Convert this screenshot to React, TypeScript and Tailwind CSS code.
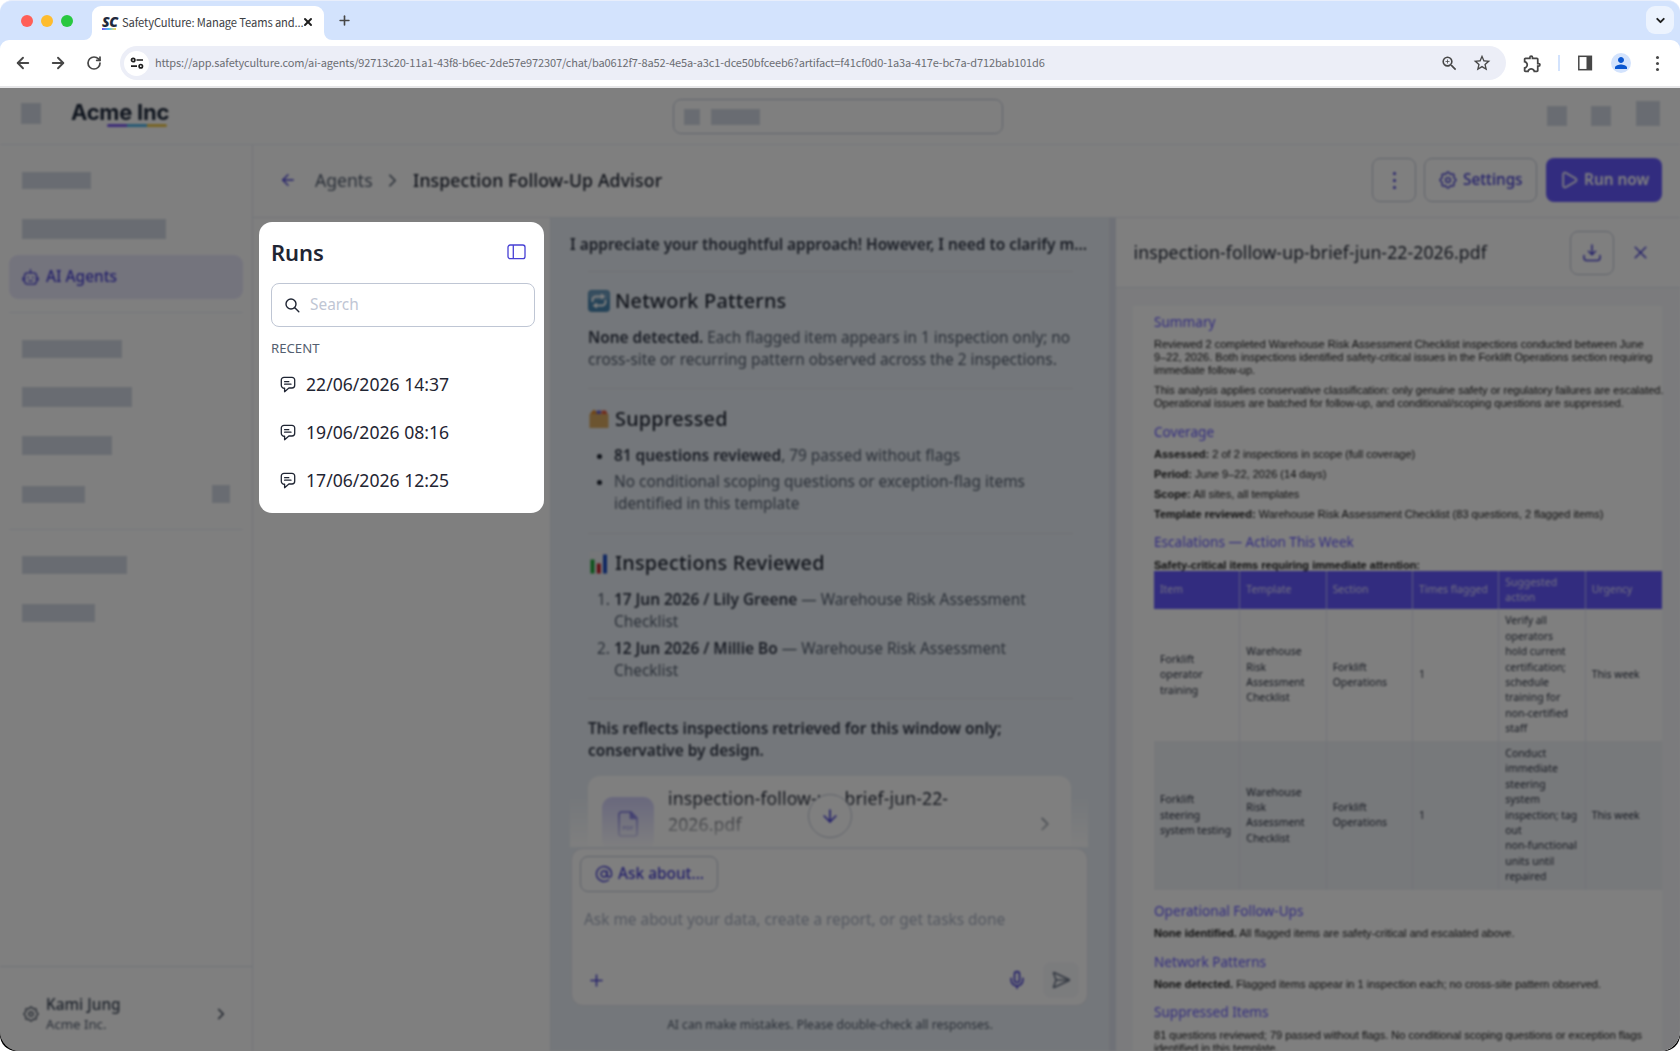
import React from 'react';
import {
  ArrowDown,
  ArrowLeft,
  ArrowRight,
  AtSign,
  ChevronDown,
  ChevronRight,
  Mic,
  Play,
  Plus,
  RotateCw,
  SendHorizontal,
  X,
} from 'lucide-react';
import { MdOutlineExtension, MdPerson, MdStarOutline, MdZoomIn } from 'react-icons/md';

const RUNS = ['22/06/2026 14:37', '19/06/2026 08:16', '17/06/2026 12:25'];

const TABLE_HEAD = ['Item', 'Template', 'Section', 'Times flagged', 'Suggested action', 'Urgency'];

const TABLE_ROWS = [
  [
    ['Forklift', 'operator', 'training'],
    ['Warehouse', 'Risk', 'Assessment', 'Checklist'],
    ['Forklift', 'Operations'],
    ['1'],
    ['Verify all', 'operators', 'hold current', 'certification;', 'schedule', 'training for', 'non-certified', 'staff'],
    ['This week'],
  ],
  [
    ['Forklift', 'steering', 'system testing'],
    ['Warehouse', 'Risk', 'Assessment', 'Checklist'],
    ['Forklift', 'Operations'],
    ['1'],
    ['Conduct', 'immediate', 'steering', 'system', 'inspection; tag', 'out', 'non-functional', 'units until', 'repaired'],
    ['This week'],
  ],
];

// Outline of the eight-lobed gear, sampled once
const GEAR_PATH =
  Array.from({ length: 96 }, (_, i) => {
    const a = (i / 96) * Math.PI * 2;
    const r = 9.5 + 1.1 * Math.cos(8 * a);
    return `${i === 0 ? 'M' : 'L'}${(12 + r * Math.cos(a)).toFixed(2)} ${(12 + r * Math.sin(a)).toFixed(2)}`;
  }).join('') + 'Z';

const GearIcon: React.FC<{ className?: string }> = ({ className }) => (
  <svg viewBox="0 0 24 24" fill="none" stroke="currentColor" strokeWidth="1.9" className={className}>
    <path d={GEAR_PATH} />
    <circle cx="12" cy="12" r="3.2" />
  </svg>
);

const BotIcon: React.FC = () => (
  <svg width="17" height="18" viewBox="0 0 17 18" fill="none" stroke="currentColor" strokeWidth="1.3" strokeLinecap="round">
    <rect x="2.5" y="4.8" width="12" height="11.4" rx="3" />
    <path d="M8.5 4.8V1.6M1 9.5v3M16 9.5v3M6.6 12.8h3.8" />
    <path d="M6.2 9.2v.4M10.8 9.2v.4" strokeWidth="1.6" />
  </svg>
);

const ChatIcon: React.FC = () => (
  <svg width="16" height="17" viewBox="0 0 16 17" fill="none" stroke="currentColor" strokeWidth="1.3" strokeLinecap="round" strokeLinejoin="round">
    <path d="M4 1.300h8A2.700 2.700 0 0 1 14.700 4v5.300A2.700 2.700 0 0 1 12 12H8.900l-4.300 3.700V12.200A2.900 2.900 0 0 1 1.300 9.300V4A2.700 2.700 0 0 1 4 1.300Z" />
    <path d="M4.600 5.700h4.200M4.600 8.200h6.400" />
  </svg>
);

const PanelIcon: React.FC = () => (
  <svg width="19" height="16" viewBox="0 0 19 16" fill="none" stroke="currentColor" strokeWidth="1.3">
    <rect x="1" y="1" width="17" height="13.6" rx="2.2" />
    <path d="M6.300 1v13.600" />
  </svg>
);

const RepeatEmoji: React.FC = () => (
  <svg width="22" height="22" viewBox="0 0 22 22">
    <rect width="22" height="22" rx="4" fill="#4a86b0" />
    <rect x="1" y="1" width="20" height="9" rx="3" fill="#6f9dbf" />
    <path d="M4.500 12V10a3.500 3.500 0 0 1 3.500-3.500h6M17.500 10v2a3.500 3.500 0 0 1-3.500 3.500H8" fill="none" stroke="#fff" strokeWidth="2" />
    <path d="m13 3.500 4.500 3-4.500 3ZM9 12.500l-4.500 3 4.500 3Z" fill="#fff" />
  </svg>
);

const FolderEmoji: React.FC = () => (
  <svg width="22" height="22" viewBox="0 0 22 22">
    <path d="M2.500 5 6 1.500 9.500 5v3h-7Z" fill="#e08a2e" />
    <path d="M8.500 2.500h4.500V6H8.500Z" fill="#6a62c8" />
    <path d="M13.500 2.500H18L19.500 6h-6Z" fill="#e2583c" />
    <path d="M1.500 6h19v14h-19Z" fill="#d9a860" />
  </svg>
);

const ChartEmoji: React.FC = () => (
  <svg width="22" height="22" viewBox="0 0 22 22">
    <rect x="1.500" width="18" height="22" fill="#eef0f4" />
    <rect x="2.500" y="7.500" width="4" height="14" fill="#1ea53a" />
    <rect x="8.800" y="11.500" width="4" height="10" fill="#c3202c" />
    <rect x="15" y="2.500" width="4" height="19" fill="#1f4fc4" />
  </svg>
);

const Block: React.FC<{ className: string }> = ({ className }) => (
  <div className={`shrink-0 bg-[#d3d9e4] ${className}`} />
);

const BrowserChrome: React.FC = () => (
  <div className="h-[88px] shrink-0 overflow-hidden rounded-t-[12px] border-t border-[#e8eefb] bg-[#d3e3fd] font-['Noto_Sans_CJK_JP','Noto_Sans',sans-serif]">
    <div className="flex h-[39px] items-end pr-[6px]">
      <div className="flex h-full w-[84px] items-center gap-[8px] pl-[21px]">
        <span className="size-[12px] rounded-full bg-[#ff5f57]" />
        <span className="size-[12px] rounded-full bg-[#febc2e]" />
        <span className="size-[12px] rounded-full bg-[#28c840]" />
      </div>
      <svg width="8" height="8" viewBox="0 0 8 8">
        <path d="M8 0v8H0a8 8 0 0 0 8-8Z" fill="#fff" />
      </svg>
      <div className="flex h-[34px] w-[232px] items-center rounded-t-[9px] bg-white pl-[10px]">
        <div className="flex w-[17px] flex-col">
          <span className="font-['Open_Sans',sans-serif] text-[14px] leading-[11px] font-extrabold tracking-[-0.500px] text-[#1f2a3d] italic">SC</span>
          <span className="mt-px h-[1.500px] w-[14px] bg-linear-to-r from-[#7a4cf0] via-[#3cc3f0] to-[#ffd53d]" />
        </div>
        <span className="ml-[3px] w-[180px] pb-[2px] text-[11.200px] leading-[20px] tracking-[-0.120px] whitespace-nowrap text-[#3c4043]">
          SafetyCulture: Manage Teams and...
        </span>
        <X className="-mt-[3px] size-[12px] text-[#1f1f1f]" strokeWidth={4} />
      </div>
      <svg width="8" height="8" viewBox="0 0 8 8">
        <path d="M0 0v8h8a8 8 0 0 1-8-8Z" fill="#fff" />
      </svg>
      <Plus className="mb-[12px] ml-[5px] size-[15px] text-[#474747]" strokeWidth={2.600} />
      <div className="mb-[6px] ml-auto flex h-[28px] w-[28px] items-center justify-center rounded-[9px] bg-[#ecf3fe]">
        <ChevronDown className="size-[13px] text-[#1f1f1f]" strokeWidth={3.500} />
      </div>
    </div>
    <div className="flex h-[48px] items-center rounded-t-[9px] border-b-2 border-[#e6e6e8] bg-white pl-[14px] text-[#474747]">
      <ArrowLeft className="size-[18px]" strokeWidth={2.500} />
      <ArrowRight className="ml-[17px] size-[18px]" strokeWidth={2.500} />
      <RotateCw className="ml-[19px] size-[16px]" strokeWidth={2.600} />
      <div className="ml-[18px] flex h-[34px] w-[1386px] items-center rounded-full bg-[#eceef7] pl-[4px]">
        <div className="flex size-[25px] items-center justify-center rounded-full bg-white">
          <svg width="14" height="14" viewBox="0 0 14 14" fill="none" stroke="#1f1f1f" strokeWidth="1.700">
            <circle cx="3.200" cy="4" r="1.700" />
            <path d="M6.500 4H13M1 10.200h6" />
            <circle cx="10.800" cy="10.200" r="1.700" />
          </svg>
        </div>
        <span className="ml-[6px] w-[1276px] pb-px text-[11px] tracking-[-0.132px] whitespace-nowrap text-[#6b6d73]">
          https://app.safetyculture.com/ai-agents/92713c20-11a1-43f8-b6ec-2de57e972307/chat/ba0612f7-8a52-4e5a-a3c1-dce50bfceeb6?artifact=f41cf0d0-1a3a-417e-bc7a-d712bab101d6
        </span>
        <MdZoomIn className="ml-[9px] size-[19px]" />
        <MdStarOutline className="ml-[13px] size-[20px]" />
      </div>
      <MdOutlineExtension className="ml-[16px] size-[21px]" />
      <div className="ml-[15px] h-[16px] w-[2px] bg-[#d3e3fd]" />
      <svg className="ml-[17px]" width="16" height="16" viewBox="0 0 16 16">
        <rect x="1.800" y="1.300" width="12.600" height="13.400" fill="none" stroke="#474747" strokeWidth="1.500" />
        <path d="M9.500 1.300h5v13.400h-5Z" fill="#474747" />
      </svg>
      <div className="ml-[18px] flex size-[20px] items-center justify-center rounded-full bg-[#d3e3fd]">
        <MdPerson className="size-[18px] text-[#0b57d0]" />
      </div>
      <div className="ml-[25px] flex flex-col gap-[3px]">
        <span className="size-[3px] rounded-full bg-[#474747]" />
        <span className="size-[3px] rounded-full bg-[#474747]" />
        <span className="size-[3px] rounded-full bg-[#474747]" />
      </div>
    </div>
  </div>
);

const TopBar: React.FC = () => (
  <div className="flex h-[57px] shrink-0 border-b border-[#e9eef6] pr-[20px] pl-[21px]">
    <Block className="mt-[15px] h-[21px] w-[20px]" />
    <div className="mt-[11px] ml-[30px] w-[98px]">
      <p className="font-['Inter',sans-serif] text-[22px] leading-[27px] font-bold tracking-[-0.250px] whitespace-nowrap text-[#1f2a3d]">Acme Inc</p>
      <div className="-mt-[2px] ml-[36px] flex h-[3px] w-[60px] overflow-hidden rounded-sm">
        <span className="flex-1 bg-[#7a5af0]" />
        <span className="flex-1 bg-[#4fb4e8]" />
        <span className="flex-1 bg-[#f0c94a]" />
      </div>
    </div>
    <div className="mt-[11px] ml-[504px] flex h-[35px] w-[330px] items-center rounded-[8px] border border-[#c2c9d8] pl-[10px]">
      <Block className="h-[16px] w-[16px]" />
      <Block className="ml-[11px] h-[16px] w-[49px]" />
    </div>
    <Block className="mt-[18px] ml-auto h-[20px] w-[20px]" />
    <Block className="mt-[18px] ml-[24px] h-[20px] w-[20px]" />
    <Block className="mt-[13px] ml-[25px] h-[25px] w-[24px]" />
  </div>
);

const Sidebar: React.FC = () => (
  <div className="flex w-[253px] shrink-0 flex-col border-r border-[#e3e8f2]">
    <div className="px-[9px]">
      <div className="pl-[13px]">
        <Block className="mt-[27px] h-[17px] w-[69px]" />
        <Block className="mt-[30px] h-[20px] w-[144px]" />
      </div>
      <div className="mt-[16px] flex h-[43.500px] items-center rounded-[9px] bg-[#e9e8fb] pl-[13px] text-[#4740d4]">
        <BotIcon />
        <span className="ml-[7px] text-[15.400px] font-medium">AI Agents</span>
      </div>
      <div className="mt-[13.500px] h-px bg-[#e9eef6]" />
      <div className="pl-[13px]">
        <Block className="mt-[27px] h-[18px] w-[100px]" />
        <Block className="mt-[29px] h-[20px] w-[110px]" />
        <Block className="mt-[29px] h-[19px] w-[90px]" />
        <div className="mt-[30px] flex h-[18px] justify-between pr-[13px]">
          <Block className="mt-px h-[17px] w-[63px]" />
          <Block className="h-[18px] w-[18px]" />
        </div>
      </div>
      <div className="mt-[26px] h-px bg-[#e9eef6]" />
      <div className="pl-[13px]">
        <Block className="mt-[26px] h-[18px] w-[105px]" />
        <Block className="mt-[30px] h-[18px] w-[73px]" />
      </div>
    </div>
    <div className="mt-auto flex h-[85px] border-t border-[#dfe4ee] pt-[28px] pl-[23px] text-[#3f495a]">
      <GearIcon className="mt-[11px] size-[16px]" />
      <div className="ml-[7px] w-[166px]">
        <p className="text-[15.400px] leading-[20px] font-medium">Kami Jung</p>
        <p className="text-[13.200px] leading-[18px] text-[#545f70]">Acme Inc.</p>
      </div>
      <ChevronRight className="mt-[10px] size-[18px]" strokeWidth={2.200} />
    </div>
  </div>
);

const AgentHeader: React.FC = () => (
  <div className="flex h-[73px] shrink-0 items-center border-b border-[#e3e8f2] pr-[18px] pb-[2px] pl-[26px] text-[#4740d4]">
    <ArrowLeft className="size-[18px]" strokeWidth={1.800} />
    <span className="ml-[18px] w-[59px] text-[17.600px] text-[#545f70]">Agents</span>
    <ChevronRight className="ml-[8px] size-[21px] text-[#545f70]" strokeWidth={2} />
    <span className="ml-[10px] text-[17.600px] font-medium tracking-[0.160px] whitespace-nowrap text-[#1f2533]">Inspection Follow-Up Advisor</span>
    <div className="ml-auto flex h-[44px] w-[44px] flex-col items-center justify-center gap-[4px] rounded-[8px] border border-[#bfc6d4]">
      <span className="size-[3px] rounded-full bg-[#4740d4]" />
      <span className="size-[3px] rounded-full bg-[#4740d4]" />
      <span className="size-[3px] rounded-full bg-[#4740d4]" />
    </div>
    <div className="ml-[8px] flex h-[44px] w-[113px] items-center rounded-[8px] border border-[#bfc6d4] pl-[14px]">
      <GearIcon className="size-[18px]" />
      <span className="ml-[6px] pb-px text-[15.300px] font-medium">Settings</span>
    </div>
    <div className="ml-[9px] flex h-[44px] w-[116px] items-center rounded-[8px] bg-[#6559ff] pl-[13px] text-white">
      <Play className="size-[20px]" strokeWidth={2} />
      <span className="ml-[5px] text-[15.400px] font-semibold whitespace-nowrap">Run now</span>
    </div>
  </div>
);

const Rule: React.FC<{ className?: string }> = ({ className }) => (
  <div className={`h-px w-[485px] bg-[#dcdfea] ${className}`} />
);

const Composer: React.FC = () => (
  <div className="mr-[21px] ml-[20px] mt-px h-[158px] shrink-0 rounded-[12px] border border-[#e3e5ee] bg-white px-[8px] text-[#4740d4]">
    <div className="mt-[7px] flex h-[36px] w-[138px] items-center rounded-[8px] border border-[#bfc6d4] pl-[14px]">
      <AtSign className="size-[18px]" strokeWidth={1.900} />
      <span className="ml-[5px] text-[15.400px] font-medium whitespace-nowrap">Ask about...</span>
    </div>
    <p className="mt-[17px] pl-[4px] text-[15.400px] leading-[22px] whitespace-nowrap text-[#a9b1c2]">
      Ask me about your data, create a report, or get tasks done
    </p>
    <div className="mt-[31px] flex h-[36px] items-center pl-[7px]">
      <Plus className="size-[19px]" strokeWidth={1.900} />
      <Mic className="ml-auto size-[20px]" strokeWidth={2} />
      <div className="ml-[16px] flex size-[36px] items-center justify-center rounded-[8px] bg-[#f7f8fb]">
        <SendHorizontal className="size-[20px] text-[#6c7688]" strokeWidth={2} />
      </div>
    </div>
  </div>
);

const Chat: React.FC = () => (
  <div className="flex w-[558px] shrink-0 flex-col bg-[#e9eff6] text-[15.400px] leading-[22px] text-[#545f70]">
    <p className="h-[53px] pt-[16px] pl-[19px] font-semibold whitespace-nowrap text-[#333a4a]">
      I appreciate your thoughtful approach! However, I need to clarify m...
    </p>
    <div className="relative h-[576px] overflow-hidden pl-[37px]">
      <Rule />
      <h3 className="mt-[15px] flex h-[28px] items-center gap-[5px] text-[19.800px] font-medium tracking-[0.270px] text-[#1f2533]">
        <RepeatEmoji />
        Network Patterns
      </h3>
      <p className="mt-[12px] whitespace-nowrap">
        <b className="font-semibold text-[#333a4a]">None detected.</b> Each flagged item appears in 1 inspection only; no
        <br />
        cross-site or recurring pattern observed across the 2 inspections.
      </p>
      <Rule className="mt-[17px]" />
      <h3 className="mt-[16px] flex h-[28px] items-center gap-[5px] text-[19.800px] font-medium tracking-[0.270px] text-[#1f2533]">
        <FolderEmoji />
        Suppressed
      </h3>
      <ul className="mt-[12px] list-disc pl-[26px] whitespace-nowrap marker:text-[#1f2533]">
        <li>
          <b className="font-semibold text-[#333a4a]">81 questions reviewed</b>, 79 passed without flags
        </li>
        <li className="mt-[4px]">
          No conditional scoping questions or exception-flag items
          <br />
          identified in this template
        </li>
      </ul>
      <Rule className="mt-[18px]" />
      <h3 className="mt-[15px] flex h-[28px] items-center gap-[5px] text-[19.800px] font-medium tracking-[0.270px] text-[#1f2533]">
        <ChartEmoji />
        Inspections Reviewed
      </h3>
      <ol className="mt-[12px] list-decimal pl-[26px] whitespace-nowrap">
        <li>
          <b className="font-semibold text-[#333a4a]">17 Jun 2026 / Lily Greene</b> — Warehouse Risk Assessment
          <br />
          Checklist
        </li>
        <li className="mt-[5px]">
          <b className="font-semibold text-[#333a4a]">12 Jun 2026 / Millie Bo</b> — Warehouse Risk Assessment
          <br />
          Checklist
        </li>
      </ol>
      <Rule className="mt-[16px]" />
      <p className="mt-[19px] font-semibold whitespace-nowrap text-[#333a4a]">
        This reflects inspections retrieved for this window only;
        <br />
        conservative by design.
      </p>
      <div className="mt-[14px] flex h-[110px] w-[483px] rounded-[12px] bg-white pl-[14px]">
        <div className="mt-[21px] flex h-[54px] w-[52px] items-center justify-center rounded-[11px] bg-[#d3d1fb] text-[#4740d4]">
          <svg width="20" height="26" viewBox="0 0 20 26" fill="none" stroke="currentColor" strokeWidth="1.600" strokeLinejoin="round">
            <path d="M3.500 1h9.500l6 6v15.500a2.500 2.500 0 0 1-2.500 2.500h-13A2.500 2.500 0 0 1 1 22.500v-19A2.500 2.500 0 0 1 3.500 1Z" />
            <path d="M12.500 1v6.500H19" fill="currentColor" />
            <text x="4.200" y="18.500" fontSize="6" fontFamily="Noto Sans" fontWeight="700" fill="currentColor" stroke="none">PDF</text>
          </svg>
        </div>
        <p className="mt-[9px] ml-[14px] w-[366px] text-[17.600px] leading-[26px] tracking-[0.120px] text-[#1f2533]">
          inspection-follow-up-brief-jun-22-
          <br />
          2026.pdf
        </p>
        <ChevronRight className="mt-[37px] size-[22px] text-[#545f70]" strokeWidth={2} />
      </div>
      {/* The thread fades out behind the composer */}
      <div className="absolute bottom-0 left-[19px] h-[50px] w-[518px] bg-linear-to-b from-white/0 to-white/95" />
      <div className="absolute bottom-[9px] left-[257px] flex size-[44px] items-center justify-center rounded-full border border-[#bfc6d4] bg-white">
        <ArrowDown className="size-[20px] text-[#4740d4]" strokeWidth={2} />
      </div>
    </div>
    <Composer />
    <p className="mt-[9px] text-center text-[12.100px] leading-[20px]">AI can make mistakes. Please double-check all responses.</p>
  </div>
);

const DocHeading: React.FC<{ children: React.ReactNode }> = ({ children }) => (
  <h4 className="mt-[11.500px] mb-[6.200px] text-[13.600px] leading-[20px] text-[#6559ff] first:mt-[6px]">{children}</h4>
);

const DocText: React.FC<{ children: React.ReactNode }> = ({ children }) => (
  <p className="mb-[7px] font-['Liberation_Sans',sans-serif] text-[11.040px] leading-[13px] whitespace-nowrap text-[#1c1c1c]">{children}</p>
);

const DocTable: React.FC = () => (
  <div className="-mt-[8px] mb-[8px] w-[508px] overflow-hidden text-[10.400px] leading-[15.400px]">
    <div className="grid h-[38.500px] w-[518px] grid-cols-6 bg-[#6559ff] text-[#e3e0ff]">
      {TABLE_HEAD.map((label) => (
        <div key={label} className="flex items-center border-r border-[#b9b5ff] px-[6px] leading-[15px]">
          {label}
        </div>
      ))}
    </div>
    {TABLE_ROWS.map((row, r) => (
      <div
        key={r}
        className={`grid w-[518px] grid-cols-6 text-[#2b3242] ${r === 1 ? 'h-[148.500px] bg-[#eff2f6]' : 'h-[132px]'}`}
      >
        {row.map((lines, c) => (
          <div key={c} className="flex flex-col justify-center border-r border-[#e3e8f2] pl-[6px] whitespace-nowrap">
            {lines.map((line) => (
              <span key={line}>{line}</span>
            ))}
          </div>
        ))}
      </div>
    ))}
  </div>
);

const Artifact: React.FC = () => (
  <div className="flex min-w-0 flex-1 flex-col">
    <div className="flex h-[70px] shrink-0 items-center border-b border-[#e3e8f2] pl-[17.500px] text-[#4740d4]">
      <span className="w-[436.500px] text-[17.600px] tracking-[0.110px] whitespace-nowrap text-[#1f2533]">inspection-follow-up-brief-jun-22-2026.pdf</span>
      <div className="flex size-[44px] items-center justify-center rounded-[8px] border border-[#bfc6d4]">
        <svg width="18" height="18" viewBox="0 0 18 18" fill="none" stroke="currentColor" strokeWidth="1.500" strokeLinecap="round" strokeLinejoin="round">
          <path d="M9 1v9.500M5.500 7.200 9 10.700l3.500-3.500M1 11.500v2.300A2.700 2.700 0 0 0 3.700 16.500h10.600a2.700 2.700 0 0 0 2.700-2.700v-2.300" />
        </svg>
      </div>
      <X className="ml-[16px] size-[21px]" strokeWidth={1.700} />
    </div>
    <div className="min-h-0 flex-1 overflow-hidden bg-[#f6f7fa] pt-[18px] pl-[17px]">
      <div className="flow-root h-[746px] w-[529px] bg-white pl-[21px]">
        <DocHeading>Summary</DocHeading>
        <DocText>
          Reviewed 2 completed Warehouse Risk Assessment Checklist inspections conducted between June
          <br />
          9–22, 2026. Both inspections identified safety-critical issues in the Forklift Operations section requiring
          <br />
          immediate follow-up.
        </DocText>
        <DocText>
          This analysis applies conservative classification: only genuine safety or regulatory failures are escalated.
          <br />
          Operational issues are batched for follow-up, and conditional/scoping questions are suppressed.
        </DocText>
        <DocHeading>Coverage</DocHeading>
        <DocText>
          <b>Assessed:</b> 2 of 2 inspections in scope (full coverage)
        </DocText>
        <DocText>
          <b>Period:</b> June 9–22, 2026 (14 days)
        </DocText>
        <DocText>
          <b>Scope:</b> All sites, all templates
        </DocText>
        <DocText>
          <b>Template reviewed:</b> Warehouse Risk Assessment Checklist (83 questions, 2 flagged items)
        </DocText>
        <DocHeading>Escalations — Action This Week</DocHeading>
        <DocText>
          <b>Safety-critical items requiring immediate attention:</b>
        </DocText>
        <DocTable />
        <DocHeading>Operational Follow-Ups</DocHeading>
        <DocText>
          <b>None identified.</b> All flagged items are safety-critical and escalated above.
        </DocText>
        <DocHeading>Network Patterns</DocHeading>
        <DocText>
          <b>None detected.</b> Flagged items appear in 1 inspection each; no cross-site pattern observed.
        </DocText>
        <DocHeading>Suppressed Items</DocHeading>
        <DocText>
          81 questions reviewed; 79 passed without flags. No conditional scoping questions or exception flags
          <br />
          identified in this template.
        </DocText>
      </div>
    </div>
  </div>
);

const RunsPanel: React.FC = () => (
  <div className="absolute top-[134px] left-[259px] h-[291px] w-[285px] rounded-[13px] bg-white pt-[14px] pr-[9px] pl-[12px] text-[#1f2533]">
    <div className="flex h-[30px] items-center justify-between pr-[9px]">
      <h2 className="pt-px text-[22px] leading-[30px] font-semibold tracking-[-0.100px]">Runs</h2>
      <span className="pt-[2px] text-[#4740d4]">
        <PanelIcon />
      </span>
    </div>
    <div className="mt-[17px] flex h-[44px] items-center rounded-[8px] border border-[#bfc6d4] pl-[13px]">
      <svg width="15" height="15" viewBox="0 0 15 15" fill="none" stroke="currentColor" strokeWidth="1.400" strokeLinecap="round">
        <circle cx="6" cy="6" r="5" />
        <path d="m9.800 9.800 4 4" />
      </svg>
      <span className="ml-[10px] text-[15.400px] text-[#bfc6d4]">Search</span>
    </div>
    <p className="mt-[12px] text-[13.200px] leading-[18px] text-[#545f70]">RECENT</p>
    <ul className="mt-[3px]">
      {RUNS.map((run) => (
        <li key={run} className="flex h-[48px] items-center pl-[8.500px] text-[17.600px]">
          <ChatIcon />
          <span className="ml-[10.500px]">{run}</span>
        </li>
      ))}
    </ul>
  </div>
);

const App: React.FC = () => (
  <div className="h-[1051px] w-[1680px] overflow-hidden bg-white font-['Noto_Sans',sans-serif]">
    <div className="flex h-full flex-col overflow-hidden rounded-b-[16px]">
      <BrowserChrome />
      <div className="relative min-h-0 flex-1 bg-black">
        <div className="relative h-full overflow-hidden rounded-b-[20px] bg-white">
          <div className="flex h-full flex-col blur-[0.900px]">
            <TopBar />
            <div className="flex min-h-0 flex-1">
              <Sidebar />
              <div className="flex min-w-0 flex-1 flex-col">
                <AgentHeader />
                <div className="flex min-h-0 flex-1">
                  <div className="w-[298px] shrink-0 border-r border-[#e3e8f2]" />
                  <Chat />
                  <div className="w-[7px] shrink-0 bg-[#dfe3ee]" />
                  <Artifact />
                </div>
              </div>
            </div>
          </div>
          <div className="absolute inset-0 bg-black/50" />
        </div>
        <RunsPanel />
      </div>
    </div>
  </div>
);

export default App;
